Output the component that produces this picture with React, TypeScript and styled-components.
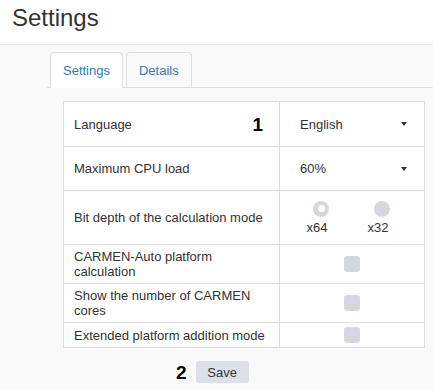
import React from "react";
import styled, { createGlobalStyle } from "styled-components";

const GlobalStyle = createGlobalStyle`
  body {
    margin: 0;
    background: #f9f9f9;
    font-family: "Liberation Sans", Arial, sans-serif;
    color: #333;
  }
`;

const Header = styled.header`
  height: 45px;
  box-sizing: border-box;
  background: #fff;
  border-bottom: 1px solid #e6e6e6;
  padding: 6px 0 0 12px;
`;

const Title = styled.h1`
  margin: 0;
  font-size: 24px;
  line-height: 24px;
  font-weight: 400;
  color: #333;
`;

const Content = styled.main`
  padding: 7px 0 0 47px;
`;

const TabList = styled.div`
  display: flex;
  gap: 3px;
  padding-left: 3px;
  border-bottom: 1px solid #ddd;
  height: 35px;
`;

const Tab = styled.div<{ $active?: boolean }>`
  display: flex;
  align-items: center;
  padding: 0 12px;
  font-size: 13px;
  color: #337ab7;
  border: 1px solid #ddd;
  border-bottom: ${({ $active }) => ($active ? "1px solid #fff" : "none")};
  border-radius: 4px 4px 0 0;
  background: ${({ $active }) => ($active ? "#fff" : "transparent")};
  box-sizing: border-box;
  height: ${({ $active }) => ($active ? "36px" : "35px")};
`;

const Table = styled.table`
  margin: 13px 0 0 16px;
  border-collapse: collapse;
  background: #fff;
  width: 362px;
  font-size: 13px;
  line-height: 15px;
`;

const Row = styled.tr<{ $h: number }>`
  height: ${({ $h }) => $h}px;
`;

const Label = styled.td`
  width: 216px;
  border: 1px solid #ddd;
  padding: 4px 10px;
  box-sizing: border-box;
  vertical-align: middle;
`;

const LabelInner = styled.div`
  display: flex;
  align-items: center;
  justify-content: space-between;
  padding-right: 6px;
`;

const Marker = styled.span`
  font-size: 19px;
  font-weight: 700;
  color: #000;
  line-height: 19px;
`;

const Value = styled.td`
  border: 1px solid #ddd;
  padding: 4px 0;
  vertical-align: middle;
`;

const Select = styled.div`
  display: flex;
  align-items: center;
  justify-content: space-between;
  padding: 0 17px 0 20px;
`;

const Caret = styled.span`
  width: 0;
  height: 0;
  border-left: 3.5px solid transparent;
  border-right: 3.5px solid transparent;
  border-top: 4px solid #333;
`;

const RadioGroup = styled.div`
  display: flex;
  justify-content: center;
  gap: 37px;
  padding-right: 9px;
`;

const RadioItem = styled.label`
  display: flex;
  flex-direction: column;
  align-items: center;
  gap: 3px;
  font-size: 13px;
`;

const Radio = styled.span<{ $checked?: boolean }>`
  width: 16px;
  height: 16px;
  margin-left: 8px;
  border-radius: 50%;
  background: #d5d9df;
  display: flex;
  align-items: center;
  justify-content: center;
  &::after {
    content: "";
    width: 7px;
    height: 7px;
    border-radius: 50%;
    background: #fff;
    display: ${({ $checked }) => ($checked ? "block" : "none")};
  }
`;

const Check = styled.span`
  display: block;
  width: 16px;
  height: 16px;
  margin: 0 auto;
  border-radius: 3px;
  background: #d5d9df;
`;

const Footer = styled.div`
  display: flex;
  align-items: center;
  gap: 9px;
  margin-top: 13px;
  padding-left: 129px;
`;

const SaveButton = styled.button`
  width: 53px;
  height: 22px;
  border: none;
  border-radius: 3px;
  background: #dde1e7;
  color: #333;
  font-family: "Liberation Sans", Arial, sans-serif;
  font-size: 13px;
  padding: 0;
`;

const App: React.FC = () => {
  return (
    <>
      <GlobalStyle />
      <Header>
        <Title>Settings</Title>
      </Header>
      <Content>
        <TabList>
          <Tab $active>Settings</Tab>
          <Tab>Details</Tab>
        </TabList>
        <Table>
          <tbody>
            <Row $h={45}>
              <Label>
                <LabelInner>
                  Language <Marker>1</Marker>
                </LabelInner>
              </Label>
              <Value>
                <Select>
                  English <Caret />
                </Select>
              </Value>
            </Row>
            <Row $h={44}>
              <Label>Maximum CPU load</Label>
              <Value>
                <Select>
                  60% <Caret />
                </Select>
              </Value>
            </Row>
            <Row $h={54}>
              <Label>Bit depth of the calculation mode</Label>
              <Value>
                <RadioGroup>
                  <RadioItem>
                    <Radio $checked />
                    x64
                  </RadioItem>
                  <RadioItem>
                    <Radio />
                    x32
                  </RadioItem>
                </RadioGroup>
              </Value>
            </Row>
            <Row $h={39}>
              <Label>CARMEN-Auto platform calculation</Label>
              <Value>
                <Check />
              </Value>
            </Row>
            <Row $h={39}>
              <Label>Show the number of CARMEN cores</Label>
              <Value>
                <Check />
              </Value>
            </Row>
            <Row $h={25}>
              <Label>Extended platform addition mode</Label>
              <Value>
                <Check />
              </Value>
            </Row>
          </tbody>
        </Table>
        <Footer>
          <Marker>2</Marker>
          <SaveButton>Save</SaveButton>
        </Footer>
      </Content>
    </>
  );
};

export default App;
